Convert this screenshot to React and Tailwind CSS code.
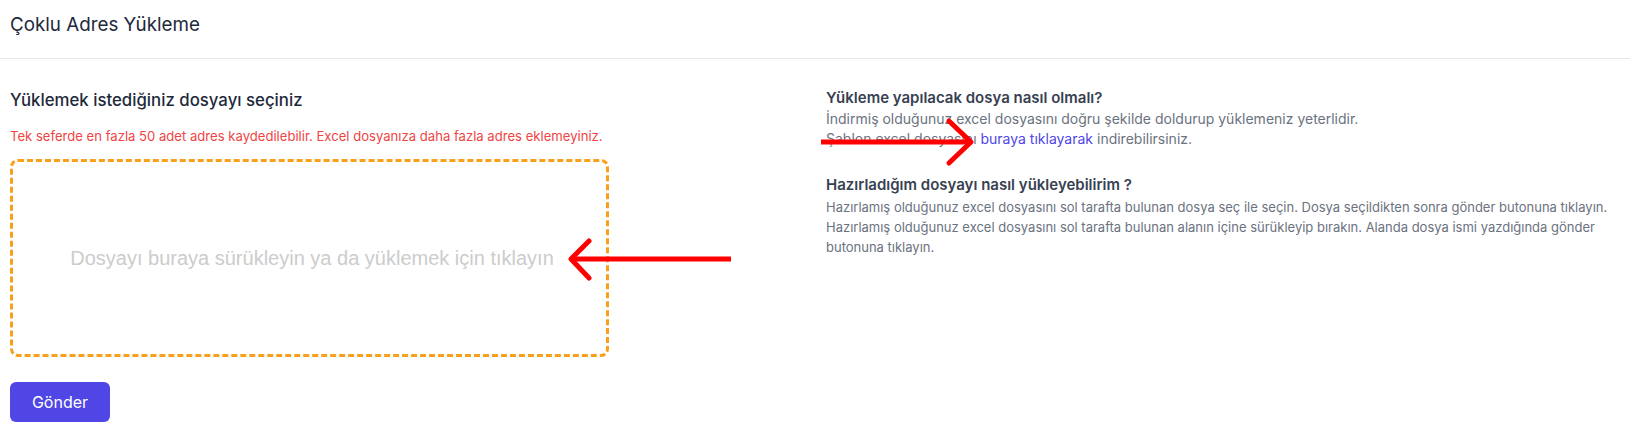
import React from 'react';

const LeftArrow = () => (
    <svg
        className="absolute left-[555px] top-[77px] pointer-events-none"
        width="166"
        height="48"
        viewBox="0 0 166 48"
        fill="none"
    >
        <path d="M6 23 H166" stroke="#ff0000" strokeWidth="5" />
        <path d="M24 5 L6 23 L24 42" stroke="#ff0000" strokeWidth="5" strokeLinecap="round" strokeLinejoin="round" />
    </svg>
);

const RightArrow = () => (
    <svg
        className="absolute left-[-10px] top-[31px] pointer-events-none"
        width="160"
        height="50"
        viewBox="0 0 160 50"
        fill="none"
    >
        <path d="M5 25 H153" stroke="#ff0000" strokeWidth="5" />
        <path d="M133 4 L155 25 L133 46" stroke="#ff0000" strokeWidth="5" strokeLinecap="round" strokeLinejoin="round" />
    </svg>
);

const App = () => {
    return (
        <div className="min-h-screen bg-white font-['Inter',sans-serif]">
            {/* page header */}
            <div className="h-[59px] px-[10px] pt-[11px] border-b border-[#e5e7eb]">
                <h1 className="text-[18.8px] leading-7 text-[#1e293b]">Çoklu Adres Yükleme</h1>
            </div>

            <div className="flex px-[10px] pt-[27px]">
                {/* left: upload */}
                <div className="w-[816px] shrink-0">
                    <h2 className="text-[16.8px] leading-7 font-medium text-[#1e293b]">
                        Yüklemek istediğiniz dosyayı seçiniz
                    </h2>
                    <p className="mt-[12px] text-[13.1px] leading-5 text-[#ef4444]">
                        Tek seferde en fazla 50 adet adres kaydedilebilir. Excel dosyanıza daha fazla adres eklemeyiniz.
                    </p>

                    <div className="relative mt-[13px]">
                        <div className="w-[599px] h-[198px] border-[3px] border-dashed border-[#f8a01c] rounded-lg flex items-center justify-center cursor-pointer">
                            <span className="font-['Liberation_Sans',Arial,sans-serif] text-[20px] text-[#cccccc] ml-[5px]">
                                Dosyayı buraya sürükleyin ya da yüklemek için tıklayın
                            </span>
                        </div>
                        <LeftArrow />
                    </div>

                    <button
                        type="button"
                        className="mt-[25px] w-[100px] h-[40px] rounded-md bg-[#4f46e5] text-white text-[16px] hover:bg-[#4338ca]"
                    >
                        Gönder
                    </button>
                </div>

                {/* right: help */}
                <div className="relative w-[800px] pt-[1px]">
                    <h3 className="text-[15px] leading-[22px] font-semibold text-[#374151]">
                        Yükleme yapılacak dosya nasıl olmalı?
                    </h3>
                    <p className="text-[14px] leading-5 text-[#6b7280]">
                        İndirmiş olduğunuz excel dosyasını doğru şekilde doldurup yüklemeniz yeterlidir.
                        <br />
                        Şablon excel dosyasını{' '}
                        <a href="#" className="text-[#4f46e5]">buraya tıklayarak</a> indirebilirsiniz.
                    </p>

                    <h3 className="mt-[25px] text-[15px] leading-[22px] font-semibold text-[#374151]">
                        Hazırladığım dosyayı nasıl yükleyebilirim ?
                    </h3>
                    <p className="mt-[1px] text-[13px] leading-5 text-[#6b7280]">
                        Hazırlamış olduğunuz excel dosyasını sol tarafta bulunan dosya seç ile seçin. Dosya seçildikten sonra gönder butonuna tıklayın.
                        Hazırlamış olduğunuz excel dosyasını sol tarafta bulunan alanın içine sürükleyip bırakın. Alanda dosya ismi yazdığında gönder butonuna tıklayın.
                    </p>

                    <RightArrow />
                </div>
            </div>
        </div>
    );
};

export default App;
